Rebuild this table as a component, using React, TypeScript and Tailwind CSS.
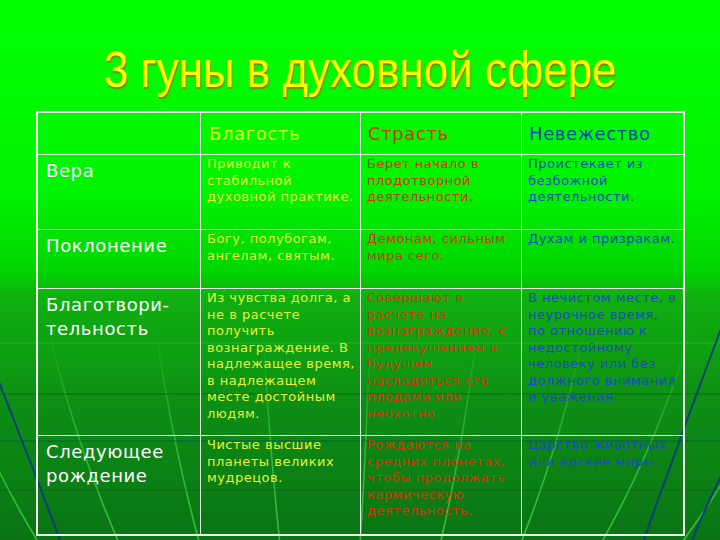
import React from "react";

const rows = [
  {
    label: ["Вера"],
    good: "Приводит к стабильной духовной практике.",
    passion: "Берет начало в плодотворной деятельности.",
    ignorance: "Проистекает из безбожной деятельности.",
  },
  {
    label: ["Поклонение"],
    good: "Богу, полубогам, ангелам, святым.",
    passion: "Демонам, сильным мира сего.",
    ignorance: "Духам и призракам.",
  },
  {
    label: ["Благотвори-", "тельность"],
    good: "Из чувства долга, а не в расчете получить вознаграждение. В надлежащее время, в надлежащем месте достойным людям.",
    passion: "Совершают в расчете на вознаграждение, с предвкушением в будущем насладиться его плодами или неохотно.",
    ignorance: "В нечистом месте, в неурочное время, по отношению к недостойному человеку или без должного внимания и уважения.",
  },
  {
    label: ["Следующее", "рождение"],
    good: "Чистые высшие планеты великих мудрецов.",
    passion: "Рождаются на средних планетах, чтобы продолжать кармическую деятельность.",
    ignorance: "Царство животных или адские миры.",
  },
];

// meridian-like lines fanning up from a point under the slide
function Backdrop() {
  const bottoms = [-120, -40, 40, 120, 200, 280, 360, 440, 520, 600, 680, 760];
  return (
    <svg className="absolute inset-0 pointer-events-none" width="720" height="540" viewBox="0 0 720 540">
      <defs>
        <linearGradient id="fade" x1="0" y1="0" x2="0" y2="1">
          <stop offset="0.45" stopColor="#5cff5c" stopOpacity="0" />
          <stop offset="0.75" stopColor="#5cff5c" stopOpacity="0.4" />
          <stop offset="1" stopColor="#5cff5c" stopOpacity="0.55" />
        </linearGradient>
      </defs>
      {bottoms.map((b) => {
        const top = 330 + (b - 330) * 1.5;
        const ctrl = 330 + (b - 330) * 1.35;
        return (
          <path
            key={b}
            d={`M ${b} 545 Q ${ctrl} 380 ${top} 150`}
            fill="none"
            stroke="url(#fade)"
            strokeWidth="1.6"
          />
        );
      })}
      <line x1="0" y1="343" x2="720" y2="343" stroke="#60ff60" strokeOpacity="0.25" />
      <line x1="0" y1="394" x2="720" y2="394" stroke="#003a10" strokeOpacity="0.45" />
      <line x1="0" y1="441" x2="720" y2="441" stroke="#0a3a6a" strokeOpacity="0.55" />
      <line x1="0" y1="490" x2="720" y2="490" stroke="#0a4a2a" strokeOpacity="0.35" />
      <path d="M -5 372 Q 28 455 62 545" fill="none" stroke="#0a3f7a" strokeWidth="2" />
      <path d="M 725 318 Q 682 432 642 545" fill="none" stroke="#0a3f7a" strokeWidth="2" />
      <path d="M 725 468 Q 705 508 690 545" fill="none" stroke="#0a3f7a" strokeWidth="2" />
    </svg>
  );
}

export default function App() {
  const rowHeights = ["h-[75px]", "h-[59px]", "h-[147px]", "h-[98px]"];
  return (
    <div
      className="relative w-[720px] h-[540px] overflow-hidden bg-[linear-gradient(180deg,#00ff00_0%,#00f400_35%,#00d600_50%,#10b010_55%,#0d8e14_75%,#0a7414_100%)]"
      style={{ fontFamily: '"DejaVu Sans", Verdana, sans-serif' }}
    >
      <Backdrop />
      <div className="relative flex flex-col">
        <div className="h-[111px] flex items-center justify-center pt-[28px]">
          <h1
            className="text-[44px] leading-none text-[#ffff00] scale-y-[1.12] [text-shadow:1px_2px_1px_#6c8c00]"
            style={{ fontFamily: '"Liberation Sans", Arial, sans-serif' }}
          >
            3 гуны в духовной сфере
          </h1>
        </div>

        <div className="ml-[36px] w-[649px] border-2 border-[#f2fff2]">
          <div className="grid grid-cols-[163px_160px_161px_161px] h-[42px] border-b border-[#e8ffe8] text-[18px] tracking-[0.6px]">
            <div className="border-r border-[#e8ffe8]" />
            <div className="border-r border-[#e8ffe8] pl-[8px] pt-[7px] text-[#ddff22]">Благость</div>
            <div className="border-r border-[#e8ffe8] pl-[7px] pt-[7px] text-[#cc3a0a]">Страсть</div>
            <div className="pl-[7px] pt-[7px] text-[#1244bb]">Невежество</div>
          </div>
          {rows.map((r, i) => (
            <div
              key={i}
              className={`grid grid-cols-[163px_160px_161px_161px] ${rowHeights[i]} ${i < rows.length - 1 ? "border-b border-[#e8ffe8]" : ""}`}
            >
              <div className="border-r border-[#e8ffe8] pl-[8px] pt-[4px] text-[18px] tracking-[0.6px] leading-[24px] text-white">
                {r.label.map((l) => (
                  <div key={l}>{l}</div>
                ))}
              </div>
              <div className="border-r border-[#e8ffe8] pl-[6px] pr-[2px] pt-[1px] text-[13px] tracking-[0.5px] leading-[16.5px] text-[#e4f23a]">
                {r.good}
              </div>
              <div className="border-r border-[#e8ffe8] pl-[6px] pr-[2px] pt-[1px] text-[13px] tracking-[0.5px] leading-[16.5px] text-[#c83c0c]">
                {r.passion}
              </div>
              <div className="pl-[6px] pr-[6px] pt-[1px] text-[13px] tracking-[0.5px] leading-[16.5px] text-[#1a4cbe]">
                {r.ignorance}
              </div>
            </div>
          ))}
        </div>
      </div>
    </div>
  );
}
